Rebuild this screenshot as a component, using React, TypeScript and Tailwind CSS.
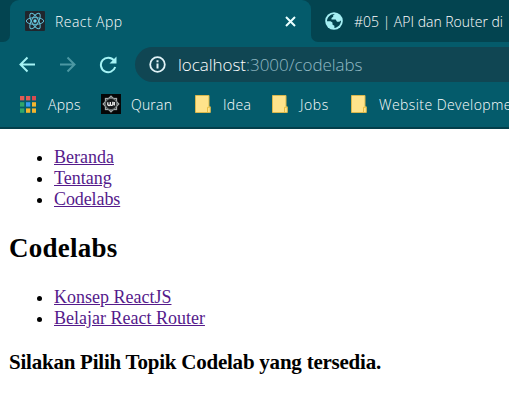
import React from "react";

const chromeFont = "font-['Open_Sans','Noto_Sans',sans-serif]";

function ReactIcon() {
  return (
    <svg className="size-5 shrink-0" viewBox="0 0 20 20">
      <rect width="20" height="20" rx="1" fill="#20262d" />
      <g fill="none" stroke="#61bdd4" strokeWidth="1">
        <ellipse cx="10" cy="10" rx="8.7" ry="3.4" />
        <ellipse cx="10" cy="10" rx="8.7" ry="3.4" transform="rotate(60 10 10)" />
        <ellipse cx="10" cy="10" rx="8.7" ry="3.4" transform="rotate(120 10 10)" />
      </g>
      <circle cx="10" cy="10" r="1.7" fill="#70d4ec" />
    </svg>
  );
}

function Globe() {
  return (
    <svg className="size-[18px] shrink-0" viewBox="0 0 18 18">
      <circle cx="9" cy="9" r="8.8" fill="#a5eff3" />
      <path d="M9.8 2 8.2 3.2v1.6L6.5 6v1.6h4.2l1.3 2.1h2.2l1.8-1.2C16.2 12 13.3 15.6 9.4 15.9v-2.1l-1.8-1-.2-2.2-1.9-1.4H2C2 5.2 5.6 1.8 9.8 2Z" fill="#034450" />
      <path d="M9.4 4.5 11.2 3l2.2 1.6-1.4 1.6-2.2.3Z" fill="#a5eff3" />
    </svg>
  );
}

function Quran() {
  return (
    <svg className="size-5 shrink-0" viewBox="0 0 20 20">
      <rect width="20" height="20" fill="#050607" />
      <g fill="none" stroke="#a4aaab" strokeWidth="1.3">
        <rect x="4.5" y="4.5" width="11" height="11" />
        <rect x="4.5" y="4.5" width="11" height="11" transform="rotate(45 10 10)" />
      </g>
      <circle cx="10" cy="10" r="5.6" fill="#151719" stroke="#686d6e" />
      <path d="M6.8 8.2v2.5q1.5 1.6 2.5 0V8m0 2.7q1.7 1.4 2.5 0V7.7m1.5.3v3.5" fill="none" stroke="#eee" strokeWidth="1.3" />
    </svg>
  );
}

function Folder() {
  return (
    <svg className="h-[18px] w-4 shrink-0" viewBox="0 0 16 18">
      <path d="M.5.5h13.5v11.3h1.3v5.7H.5Z" fill="#ffe38b" stroke="#d9b84d" />
      <path d="M12.5 17v-4.7h2" fill="none" stroke="#e7bd43" />
    </svg>
  );
}

const appColors = ["#e25b54", "#e25b54", "#d84c50", "#32a66a", "#399af2", "#f3b52e", "#32a66a", "#f3b52e", "#f3b52e"];

function AppsIcon() {
  return (
    <svg className="h-[17px] w-4 shrink-0" viewBox="0 0 16 17">
      {appColors.map((color, i) => (
        <rect key={i} x={(i % 3) * 6} y={Math.floor(i / 3) * 6.2} width="4.3" height="4.4" fill={color} />
      ))}
    </svg>
  );
}

export default function App() {
  return (
    <div className="h-[402px] w-[509px] overflow-hidden bg-white">
      <header className={`${chromeFont} h-[129px] border-b-2 border-[#033f4b] bg-[#045b6b] text-[14px] font-light text-white`}>
        <div className="flex h-[42px] bg-[#034450]">
          <div className="flex w-[10px] bg-[#045b6b]"><div className="w-full rounded-br-[7px] bg-[#034450]" /></div>
          <div className="flex w-[301px] items-center rounded-t-[9px] bg-[#045b6b] pl-[15px]">
            <ReactIcon />
            <span className="ml-[10px] w-[230px] whitespace-nowrap tracking-[0.45px]">React App</span>
            <svg className="size-[11px]" viewBox="0 0 11 11"><path d="m1 1 9 9m0-9-9 9" stroke="#eaffff" strokeWidth="2" /></svg>
          </div>
          <div className="flex flex-1 bg-[#045b6b]">
            <div className="flex flex-1 items-center rounded-bl-[7px] bg-[#034450] pl-[14px]">
              <Globe />
              <span className="ml-[11px] whitespace-nowrap">#05 | API dan Router di</span>
            </div>
          </div>
        </div>
        <div className="flex h-[45px] items-center pl-[19px]">
          <svg className="size-[17px]" viewBox="0 0 17 17"><path d="M16 8.5H2M8.5 1.5l-7 7 7 7" fill="none" stroke="#a5f3f5" strokeWidth="2" /></svg>
          <svg className="ml-[23px] size-[17px]" viewBox="0 0 17 17"><path d="M1 8.5h14M8.5 1.5l7 7-7 7" fill="none" stroke="#4c98a3" strokeWidth="2" /></svg>
          <svg className="ml-[23px] size-[18px]" viewBox="0 0 18 18"><path d="M15 4.5A7.3 7.3 0 1 0 16.2 11" fill="none" stroke="#a5f3f5" strokeWidth="2" /><path d="M17.5.5v7h-7Z" fill="#a5f3f5" /></svg>
          <div className="ml-[18px] flex h-[35px] flex-1 items-center rounded-l-full bg-[#104653] pl-[14px]">
            <svg className="size-[17px]" viewBox="0 0 17 17"><circle cx="8.5" cy="8.5" r="7.3" fill="none" stroke="#e2f3f7" strokeWidth="1.8" /><path d="M8.5 7.5v5M8.5 4.2v2" stroke="#e2f3f7" strokeWidth="2" /></svg>
            <span className="ml-[12px] whitespace-nowrap text-[17px] tracking-[-0.04px]">localhost<span className="text-[#91b9c4]">:3000/codelabs</span></span>
          </div>
        </div>
        <div className="flex h-[34px] items-center whitespace-nowrap pl-5">
          <AppsIcon /><span className="ml-3 w-[53px] shrink-0 tracking-[0.3px]">Apps</span>
          <Quran /><span className="ml-[10px] w-[64px] shrink-0 tracking-[0.2px]">Quran</span>
          <Folder /><span className="ml-[12px] w-[49px] shrink-0 tracking-[0.3px]">Idea</span>
          <Folder /><span className="ml-[12px] w-[51px] shrink-0 tracking-[0.55px]">Jobs</span>
          <Folder /><span className="ml-[12px] tracking-[0.43px]">Website Development</span>
        </div>
      </header>
      <main className="pl-[9px] pt-[18px] font-['Liberation_Serif',serif] text-[18px] leading-[21px] text-black">
        <ul className="list-disc pl-[45px] text-[#551a8b] marker:text-black">
          <li><a className="underline">Beranda</a></li>
          <li><a className="underline">Tentang</a></li>
          <li><a className="tracking-[-0.1px] underline">Codelabs</a></li>
        </ul>
        <h2 className="mt-[22px] text-[27px] font-bold leading-[32px] tracking-[0.25px]">Codelabs</h2>
        <ul className="mt-[23px] list-disc pl-[45px] text-[#551a8b] marker:text-black">
          <li><a className="underline">Konsep ReactJS</a></li>
          <li><a className="underline">Belajar React Router</a></li>
        </ul>
        <h3 className="mt-[21px] whitespace-nowrap text-[21px] font-bold leading-[25px] tracking-[-0.23px]">Silakan Pilih Topik Codelab yang tersedia.</h3>
      </main>
    </div>
  );
}
